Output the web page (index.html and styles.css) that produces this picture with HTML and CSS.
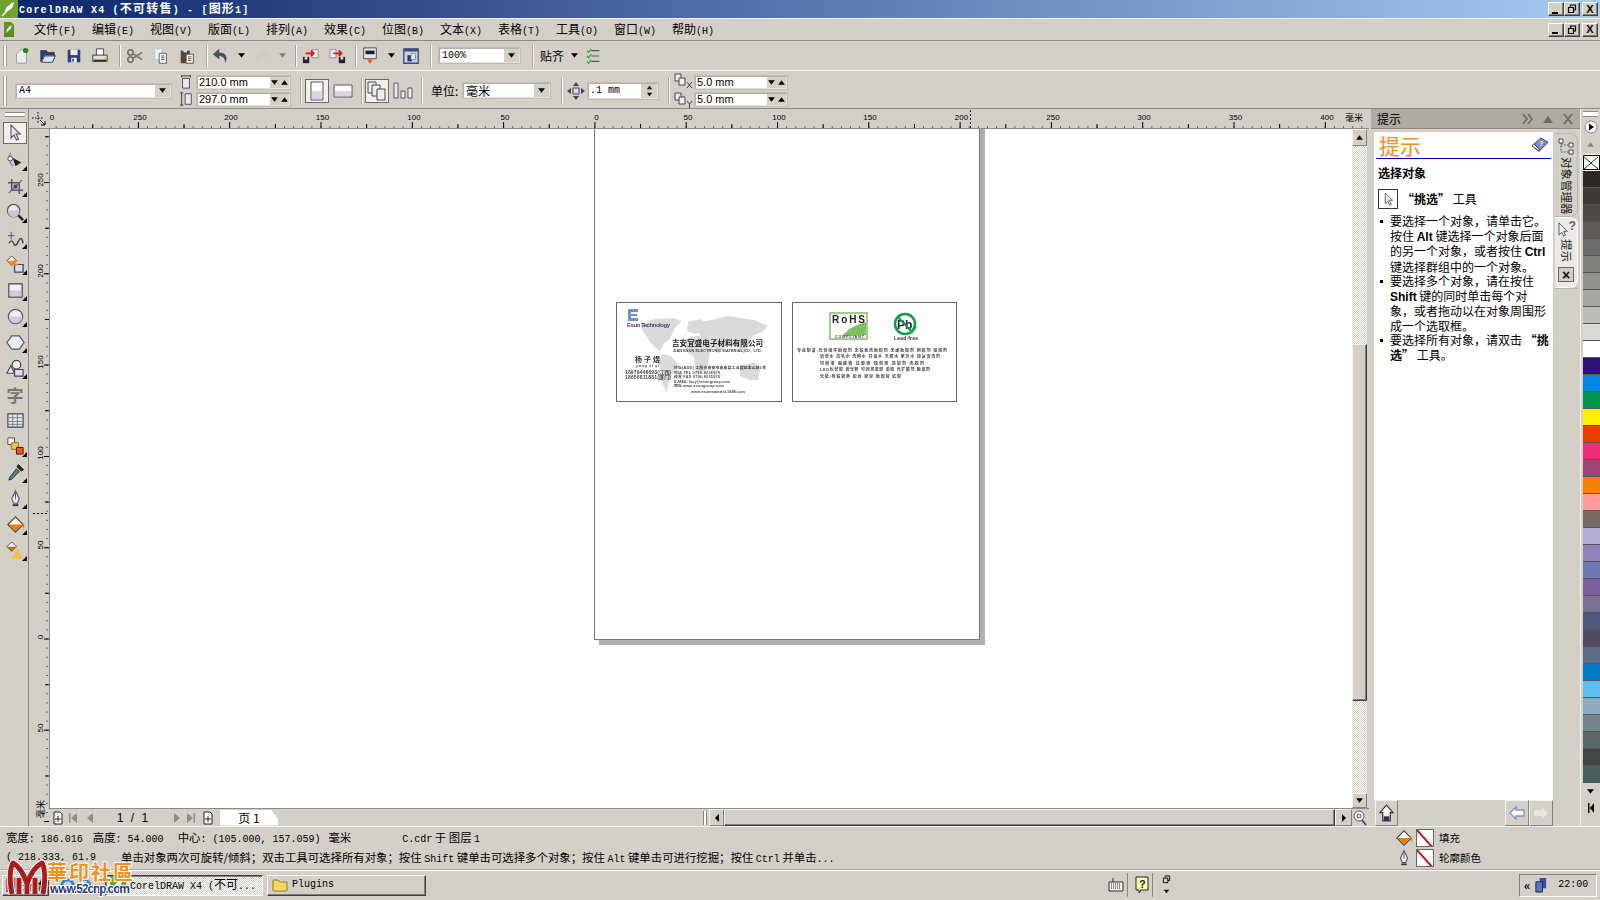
FILE: index.html
```html
<!DOCTYPE html>
<html lang="zh-CN">
<head>
<meta charset="utf-8">
<title>CorelDRAW X4</title>
<link rel="stylesheet" href="styles.css">
</head>
<body>
<svg class="defs" width="0" height="0">
  <symbol id="down" viewBox="0 0 8 8"><path d="M1 2h6L4 6z" fill="#000"/></symbol>
  <symbol id="up" viewBox="0 0 8 8"><path d="M1 6h6L4 2z" fill="#000"/></symbol>
  <symbol id="pen" viewBox="0 0 20 20"><path d="M10 2l4 8-2 5H8l-2-5z" fill="#eef" stroke="#556" stroke-width="1.2"/><path d="M10 4v7" stroke="#556"/><path d="M7 16h6v2H7z" fill="#333"/></symbol>
  <symbol id="bucket" viewBox="0 0 20 20"><path d="M10 2l8 8-8 8-8-8z" fill="#fff" stroke="#444" stroke-width="1.2"/><path d="M3 10h14l-7 7z" fill="#f07c00"/><path d="M17 9q2 1 1.500 5" fill="none" stroke="#f07c00" stroke-width="1.300"/></symbol>
  <symbol id="cursor" viewBox="0 0 16 18"><path d="M4 1v13l3-3 2.500 5 2-1-2.500-5H13z" fill="#e8eaf2" stroke="#556" stroke-width="1.100"/></symbol>
</svg>
<div class="app">

  <header class="titlebar">
    <svg class="appicon" viewBox="0 0 18 18"><rect width="18" height="18" fill="#6da52c"/><path d="M4 14Q5 6 14 2q-1 8-7 9z" fill="#fff"/><path d="M2 16l6-6" stroke="#dfe" stroke-width="1.500"/></svg>
    <span class="title-text"><span class="m">CorelDRAW X4 (</span>不可转售<span class="m">) - [</span>图形<span class="m">1]</span></span>
    <div class="winbtns">
      <span class="winbtn"><i class="min"></i></span>
      <span class="winbtn"><svg viewBox="0 0 10 10" width="10" height="10"><path d="M3.500 3V1h5v5H6.500M1.500 3.500h5v5h-5z" fill="none" stroke="#000" stroke-width="1.200"/></svg></span>
      <span class="winbtn gap2"><b>X</b></span>
    </div>
  </header>

  <nav class="menubar">
    <svg class="docicon" viewBox="0 0 10 15"><path d="M0 0h7l3 3v12H0z" fill="#5c8f2a"/><path d="M2 11Q3 5 8 3 7 8 4 9z" fill="#fff"/></svg>
    <span class="menu">文件<span class="m">(F)</span></span>
    <span class="menu">编辑<span class="m">(E)</span></span>
    <span class="menu">视图<span class="m">(V)</span></span>
    <span class="menu">版面<span class="m">(L)</span></span>
    <span class="menu">排列<span class="m">(A)</span></span>
    <span class="menu">效果<span class="m">(C)</span></span>
    <span class="menu">位图<span class="m">(B)</span></span>
    <span class="menu">文本<span class="m">(X)</span></span>
    <span class="menu">表格<span class="m">(T)</span></span>
    <span class="menu">工具<span class="m">(O)</span></span>
    <span class="menu">窗口<span class="m">(W)</span></span>
    <span class="menu">帮助<span class="m">(H)</span></span>
    <div class="winbtns">
      <span class="winbtn"><i class="min"></i></span>
      <span class="winbtn"><svg viewBox="0 0 10 10" width="10" height="10"><path d="M3.500 3V1h5v5H6.500M1.500 3.500h5v5h-5z" fill="none" stroke="#000" stroke-width="1.200"/></svg></span>
      <span class="winbtn gap2"><b>X</b></span>
    </div>
  </nav>

  <div class="toolbar">
    <i class="grip g3"></i>
    <span class="tb g2"><svg viewBox="0 0 20 20"><path d="M4 18V7l5-4h6v15z" fill="#eeeef0" stroke="#99a" /><circle cx="14" cy="4" r="3" fill="#1c8a16"/></svg></span>
    <span class="tb"><svg viewBox="0 0 20 20"><path d="M2 16V4h6l2 2h7v3H6l-4 7h13l3-7" fill="#2f3e68" stroke="#2f3e68"/><path d="M3 17l3-7h12l-3 7z" fill="#dfe3ee" stroke="#2f3e68"/></svg></span>
    <span class="tb"><svg viewBox="0 0 20 20"><path d="M3 3h14v14H3z" fill="#2f3e78"/><path d="M6 3h8v6H6z" fill="#e8eaf4"/><path d="M7 12h6v5H7z" fill="#fff"/><path d="M8 13h2v3H8z" fill="#2f3e78"/></svg></span>
    <span class="tb"><svg viewBox="0 0 20 20"><path d="M6 2h8v8H6z" fill="#fff" stroke="#444"/><path d="M2 9h16v7H2z" fill="#e4e0d0" stroke="#333"/><path d="M3 14h14v2H3z" fill="#333"/><path d="M15 11h2v1h-2z" fill="#dc0"/></svg></span>
    <i class="sep g6"></i>
    <span class="tb g1"><svg viewBox="0 0 20 20"><circle cx="5" cy="14" r="3" fill="none" stroke="#666" stroke-width="1.500"/><circle cx="5" cy="6" r="3" fill="none" stroke="#666" stroke-width="1.500"/><path d="M7 7l11 7M7 13l11-7" stroke="#777" stroke-width="1.800"/></svg></span>
    <span class="tb"><svg viewBox="0 0 20 20"><path d="M3 2h8v12H3z" fill="#eef8f8" stroke="#a8d0d0"/><path d="M8 7h8v11H8z" fill="#fff" stroke="#555"/><path d="M10 10h4M10 12h4M10 14h4" stroke="#555"/></svg></span>
    <span class="tb"><svg viewBox="0 0 20 20"><path d="M3 4h10v14H3z" fill="#5a4530"/><path d="M6 2h4v4H6z" fill="#cde"/><path d="M9 8h8v10H9z" fill="#fff" stroke="#444"/><path d="M11 11h4M11 13h4M11 15h4" stroke="#444"/></svg></span>
    <i class="sep g6"></i>
    <span class="tb"><svg viewBox="0 0 20 20"><path d="M8 2L1 8l7 6v-4q6 0 7 8 4-12-7-12z" fill="#4c5260"/></svg></span>
    <span class="tb-arrow"><svg viewBox="0 0 8 8"><use href="#down"/></svg></span>
    <span class="tb g1 faded"><svg viewBox="0 0 20 20"><path d="M12 2l7 6-7 6v-4q-6 0-7 8-4-12 7-12z" fill="#c4c4c2"/></svg></span>
    <span class="tb-arrow faded"><svg viewBox="0 0 8 8"><use href="#down"/></svg></span>
    <i class="sep g6"></i>
    <span class="tb g1"><svg viewBox="0 0 20 20"><path d="M11 3h7v9h-7z" fill="#eee" stroke="#889"/><path d="M1 11h7v7H1z" fill="#223" /><path d="M3 11h3v3H3z" fill="#ddd"/><path d="M4 7h9M10 4l3 3-3 3" fill="none" stroke="#d01818" stroke-width="2"/></svg></span>
    <span class="tb"><svg viewBox="0 0 20 20"><path d="M2 3h7v9H2z" fill="#eee" stroke="#889"/><path d="M12 11h7v7h-7z" fill="#223"/><path d="M14 11h3v3h-3z" fill="#ddd"/><path d="M6 7h9M12 4l3 3-3 3" fill="none" stroke="#d01818" stroke-width="2"/></svg></span>
    <i class="sep g5"></i>
    <span class="tb"><svg viewBox="0 0 20 20"><path d="M3 1h14v12H3z" fill="#e8e8ec" stroke="#445"/><path d="M5 4h10v4H5z" fill="#1a1a30"/><path d="M7 14l3 5 3-5z" fill="#f05a10"/></svg></span>
    <span class="tb-arrow g1"><svg viewBox="0 0 8 8"><use href="#down"/></svg></span>
    <span class="tb"><svg viewBox="0 0 20 20"><path d="M2 2h16v16H2z" fill="#cfd3e4" stroke="#3c4a7c" stroke-width="1.500"/><path d="M2 2h16v3H2z" fill="#3c4a7c"/><path d="M6 9h5v7H6z" fill="#2c3a6c"/><path d="M10 7h5v7h-5z" fill="#eee" stroke="#789"/></svg></span>
    <i class="sep g6"></i>
    <span class="field combo zoomfield g6"><span class="m">100%</span><span class="drop"><svg viewBox="0 0 8 8"><use href="#down"/></svg></span></span>
    <i class="sep g11"></i>
    <span class="label snap g6">贴齐</span>
    <span class="tb-arrow g3"><svg viewBox="0 0 8 8"><use href="#down"/></svg></span>
    <span class="tb"><svg viewBox="0 0 20 20"><path d="M7 4h9M7 10h9M7 16h9" stroke="#556" stroke-width="1.300"/><path d="M2 4l2 2 3-4M2 10l2 2 3-4M2 16l2 2 3-4" fill="none" stroke="#3c9a30" stroke-width="1.300"/></svg></span>
  </div>

  <div class="propbar">
    <i class="grip g3"></i>
    <span class="field combo a4 g8"><span class="m">A4</span><span class="drop"><svg viewBox="0 0 8 8"><use href="#down"/></svg></span></span>
    <div class="sizeicons g7">
      <svg viewBox="0 0 14 16"><path d="M3 4h8v11H3z" fill="#e8e8f0" stroke="#445"/><path d="M2 1h10M2 0v3M12 0v3" stroke="#333"/></svg>
      <svg viewBox="0 0 14 16"><path d="M6 2h7v12H6z" fill="#e8e8f0" stroke="#445"/><path d="M2 1v14M0 1h4M0 15h4" stroke="#333"/></svg>
    </div>
    <div class="stack g3">
      <span class="field spinfield"><span class="val">210.0 mm</span><span class="spin2"><svg viewBox="0 0 8 8"><use href="#down"/></svg><svg viewBox="0 0 8 8"><use href="#up"/></svg></span></span>
      <span class="field spinfield"><span class="val">297.0 mm</span><span class="spin2"><svg viewBox="0 0 8 8"><use href="#down"/></svg><svg viewBox="0 0 8 8"><use href="#up"/></svg></span></span>
    </div>
    <i class="sep g9"></i>
    <span class="pbtn on g3"><svg viewBox="0 0 14 20" width="14" height="20"><path d="M1 1h12v18H1z" fill="#fff" stroke="#556"/><path d="M2 10h10v8H2z" fill="#d8d8dc"/></svg></span>
    <span class="pbtn g2"><svg viewBox="0 0 20 14" width="20" height="14"><path d="M1 1h18v12H1z" fill="#fff" stroke="#556"/><path d="M2 7h16v5H2z" fill="#d8d8dc"/></svg></span>
    <i class="sep g6"></i>
    <span class="pbtn on g2"><svg viewBox="0 0 20 20" width="20" height="20"><path d="M1 1h8v11H1z" fill="#eee" stroke="#445"/><path d="M5 4h8v11H5z" fill="#eee" stroke="#445"/><path d="M10 8h8v11h-8z" fill="#eee" stroke="#445"/></svg></span>
    <span class="pbtn g2"><svg viewBox="0 0 20 20" width="20" height="20"><path d="M1 2h4v15H1zM8 10h4v7H8zM15 7h4v10h-4z" fill="#eee" stroke="#556"/></svg></span>
    <i class="sep g6"></i>
    <span class="label unit g8">单位:</span>
    <span class="field combo unitfield"><span>毫米</span><span class="drop"><svg viewBox="0 0 8 8"><use href="#down"/></svg></span></span>
    <i class="sep g10"></i>
    <span class="nudgeicon g4"><svg viewBox="0 0 18 18" width="18" height="18"><path d="M6 6h6v6H6z" fill="#dde" stroke="#445"/><path d="M9 0l3 4H6zM9 18l-3-4h6zM0 9l4-3v6zM18 9l-4 3V6z" fill="#445"/></svg></span>
    <span class="field nudge g2"><span class="m nudgeval">.1 mm</span><span class="spinv"><svg viewBox="0 0 8 8"><use href="#up"/></svg><svg viewBox="0 0 8 8"><use href="#down"/></svg></span></span>
    <i class="sep g9"></i>
    <div class="sizeicons dup g4">
      <svg viewBox="0 0 20 16"><path d="M1 1h6v7H1z" fill="#eee" stroke="#445"/><path d="M5 5h6v7H5z" fill="#eee" stroke="#445"/><path d="M13 9l5 6M18 9l-5 6" stroke="#445"/></svg>
      <svg viewBox="0 0 20 16"><path d="M1 1h6v7H1z" fill="#eee" stroke="#445"/><path d="M5 5h6v7H5z" fill="#eee" stroke="#445"/><path d="M13 9l2.500 3 2.500-3M15.500 12v4" fill="none" stroke="#445"/></svg>
    </div>
    <div class="stack">
      <span class="field spinfield dupfield"><span class="val">5.0 mm</span><span class="spin2"><svg viewBox="0 0 8 8"><use href="#down"/></svg><svg viewBox="0 0 8 8"><use href="#up"/></svg></span></span>
      <span class="field spinfield dupfield"><span class="val">5.0 mm</span><span class="spin2"><svg viewBox="0 0 8 8"><use href="#down"/></svg><svg viewBox="0 0 8 8"><use href="#up"/></svg></span></span>
    </div>
  </div>

  <div class="workspace">
    <aside class="toolbox">
      <i class="hgrip"></i>
      <span class="tool on"><svg viewBox="0 0 16 18"><use href="#cursor"/></svg></span>
      <span class="tool fly"><svg viewBox="0 0 20 20"><path d="M5 2q-4 7 2 14" fill="none" stroke="#889" stroke-width="1.500"/><circle cx="4.500" cy="8" r="2.500" fill="#fff" stroke="#445"/><path d="M7 7l9 5-6 4z" fill="#222"/></svg></span>
      <span class="tool fly"><svg viewBox="0 0 20 20"><path d="M6 2v12h12M2 6h12v12" fill="none" stroke="#556" stroke-width="1.600"/><path d="M3 17L17 3" stroke="#667" stroke-width="1.300"/><path d="M8 8h4v4H8z" fill="#445"/></svg></span>
      <span class="tool fly"><svg viewBox="0 0 20 20"><circle cx="8" cy="8" r="6.500" fill="#e6e8f2" stroke="#556" stroke-width="1.400"/><path d="M2 8h12v1a6 6 0 0 1-12 0z" fill="#c8c8d0"/><path d="M13 13l5 5" stroke="#222" stroke-width="2.500"/></svg></span>
      <span class="tool fly"><svg viewBox="0 0 20 20"><path d="M2 7h7M5.500 3v8" stroke="#667" stroke-width="1.200"/><path d="M3 15q3-5 5 0t5-2 5 2" fill="none" stroke="#445" stroke-width="1.500"/></svg></span>
      <span class="tool fly"><svg viewBox="0 0 20 20"><path d="M6 1l5 5-5 5-5-5z" fill="#fff" stroke="#444"/><path d="M1 6h10L6 11z" fill="#f09020"/><path d="M9 10h9v8H9z" fill="#d8dcec" stroke="#445" stroke-width="1.300"/><path d="M9 5v5h4" fill="none" stroke="#f07c00" stroke-width="1.500"/></svg></span>
      <span class="tool fly"><svg viewBox="0 0 20 20"><path d="M3 3h14v14H3z" fill="#f4f4f8" stroke="#445" stroke-width="1.300"/><path d="M4 10h12v6H4z" fill="#ccced8"/></svg></span>
      <span class="tool fly"><svg viewBox="0 0 20 20"><circle cx="10" cy="10" r="7.500" fill="#f4f4f8" stroke="#556" stroke-width="1.300"/><path d="M3 10h14a7 7 0 0 1-14 0z" fill="#ccced8"/></svg></span>
      <span class="tool fly"><svg viewBox="0 0 20 20"><path d="M6 3h8l5 7-5 7H6l-5-7z" fill="#eceef4" stroke="#556" stroke-width="1.300"/></svg></span>
      <span class="tool fly"><svg viewBox="0 0 20 20"><circle cx="11" cy="6" r="4.500" fill="#eceef4" stroke="#445" stroke-width="1.200"/><path d="M5 7L1 15h8z" fill="#eceef4" stroke="#445" stroke-width="1.200"/><path d="M9 11h9v7H9z" fill="#dde" stroke="#445" stroke-width="1.200"/></svg></span>
      <span class="tool glyph">字</span>
      <span class="tool"><svg viewBox="0 0 20 20"><path d="M2 3h16v14H2z" fill="#e8eaf2" stroke="#445" stroke-width="1.200"/><path d="M2 7h16M2 11h16M2 14h16M7 3v14M12 3v14" stroke="#778"/></svg></span>
      <span class="tool fly"><svg viewBox="0 0 20 20"><path d="M2 1h7v7H2z" fill="#fff" stroke="#445"/><path d="M6 6h7v7H6z" fill="#fcc84a" stroke="#a60"/><path d="M11 11h7v7h-7z" fill="#ee5a10" stroke="#222"/></svg></span>
      <span class="tool fly"><svg viewBox="0 0 20 20"><path d="M13 1l6 6-3 2-5-5z" fill="#222"/><path d="M11 6l3 3-8 8-3 1 1-3z" fill="#4f8c6a" stroke="#334"/></svg></span>
      <span class="tool fly"><svg viewBox="0 0 20 20"><use href="#pen"/></svg></span>
      <span class="tool fly"><svg viewBox="0 0 20 20"><use href="#bucket"/></svg></span>
      <span class="tool fly"><svg viewBox="0 0 20 20"><path d="M6 1l5 5-5 5-5-5z" fill="#fff" stroke="#444"/><path d="M1 6h10L6 11z" fill="#d86010"/><path d="M12 8l6 11H6z" fill="#f4c050"/></svg></span>
    </aside>

    <div class="center">
      <div class="hruler-row">
        <span class="corner"><svg viewBox="0 0 14 14" width="14" height="14"><path d="M6 0v12M0 6h12" stroke="#000" stroke-dasharray="1.500 1.500"/><path d="M8 8l5 5M13 9v4H9" fill="none" stroke="#000"/></svg></span>
        <svg class="hruler" width="1320" height="20" viewBox="0 0 1320 20">
          <line class="tick" x1="-2.400" x2="1320" y1="16" y2="16" stroke-width="6" stroke-dasharray="1 90.300"/>
          <line class="tick" x1="43.250" x2="1320" y1="17" y2="17" stroke-width="4" stroke-dasharray="1 90.300"/>
          <line class="tick" x1="-2.400" x2="1320" y1="18" y2="18" stroke-width="1" stroke-dasharray="1 8.130"/>
          <line class="tick" x1="921.500" x2="921.500" y1="1" y2="20" stroke-width="1" stroke-dasharray="2 2"/>
          <g class="rlabel">
            <text x="3" y="11">0</text><text x="91" y="11">250</text><text x="182" y="11">200</text><text x="273.500" y="11">150</text><text x="365" y="11">100</text><text x="456" y="11">50</text><text x="547.500" y="11">0</text><text x="639" y="11">50</text><text x="730" y="11">100</text><text x="821" y="11">150</text><text x="912.500" y="11">200</text><text x="1004" y="11">250</text><text x="1095" y="11">300</text><text x="1186.500" y="11">350</text><text x="1278" y="11">400</text>
          </g>
          <text class="runit" x="1296" y="12">毫米</text>
        </svg>
      </div>
      <div class="center-body">
        <svg class="vruler" width="20" height="697" viewBox="0 0 20 697">
          <line class="tick" y1="-38.300" y2="697" x1="17.500" x2="17.500" stroke-width="5" stroke-dasharray="1 90.300"/>
          <line class="tick" y1="7.350" y2="697" x1="18" x2="18" stroke-width="4" stroke-dasharray="1 90.300"/>
          <line class="tick" y1="-38.300" y2="697" x1="18" x2="18" stroke-width="1" stroke-dasharray="1 8.130"/>
          <line class="tick" x1="4" x2="20" y1="384.500" y2="384.500" stroke-width="1" stroke-dasharray="2 2"/>
          <g class="rlabel">
            <text transform="translate(14 51) rotate(-90)">250</text>
            <text transform="translate(14 142) rotate(-90)">200</text>
            <text transform="translate(14 233) rotate(-90)">150</text>
            <text transform="translate(14 324) rotate(-90)">100</text>
            <text transform="translate(14 416) rotate(-90)">50</text>
            <text transform="translate(14 508) rotate(-90)">0</text>
            <text transform="translate(14 599) rotate(-90)">50</text>
          </g>
          <text class="runit" transform="translate(15 689) rotate(-90)">毫米</text>
        </svg>
        <div class="center-main">
          <div class="canvas-row">
            <div class="canvas">
              <div class="page"></div>
              <svg class="card card1" width="166" height="100" viewBox="0 0 166 100" preserveAspectRatio="none">
                <rect x="0.500" y="0.500" width="165" height="99" fill="#fff" stroke="#666"/>
                <g fill="#dadada">
                  <path d="M24 24l14-7 20-1 8 3-8 8-4 10-6 4-4 8-6-4-6-8-5-8z"/>
                  <path d="M46 52l9 2 7 8-5 10-4 6-2 12-4-6-1-14-4-10z"/>
                  <path d="M72 20l12-3 6 4-3 8-8 3-8-3z"/>
                  <path d="M72 36l14-3 8 6 6 2-6 10-2 12-6 8-6-2-2-14-8-6-2-8z"/>
                  <path d="M86 20l26-6 26 4 14 6-6 6-10 4-4 10-4 8-8-8-10 0-8 8-6-10-8-4-6-8z"/>
                  <path d="M124 64l14-4 6 8-2 10-8 0-10-4z"/>
                </g>
                <path d="M12 7h10v3h-7v2h6v2h-6v2h7v3H12z" fill="#6b93c9"/>
                <text class="c-en" x="11" y="25" textLength="43">Esun Technology</text>
                <text class="c-t" x="56" y="44" textLength="91">吉安宜盛电子材料有限公司</text>
                <text class="c-s" x="57" y="50" textLength="89">JIAN ESUN ELECTRONIC MATERIAL CO., LTD.</text>
                <text class="c-n" x="19" y="60" textLength="25">杨子煜</text>
                <text class="c-s" x="20" y="65" textLength="23">yang zi yi</text>
                <text class="c-d" x="9" y="72" textLength="46">18979448693(江西)</text>
                <text class="c-d" x="9" y="77" textLength="46">18650811881(厦门)</text>
                <text class="c-s" x="58" y="67" textLength="92">地址(ADD) 江西省吉安市吉安县工业园区金山路1号</text>
                <text class="c-s" x="58" y="72" textLength="46">电话 TEL 0796-8235979</text>
                <text class="c-s" x="58" y="76" textLength="46">传真 FAX 0796-8235975</text>
                <text class="c-s" x="58" y="81" textLength="56">E-MAIL lucy@esungroup.com</text>
                <text class="c-s" x="58" y="85" textLength="50">网址 www.esungroup.com</text>
                <text class="c-s" x="75" y="91" textLength="54">www.esunmaterial.1688.com</text>
              </svg>
              <svg class="card card2" width="165" height="100" viewBox="0 0 165 100" preserveAspectRatio="none">
                <rect x="0.500" y="0.500" width="164" height="99" fill="#fff" stroke="#666"/>
                <rect x="38" y="11" width="37" height="26" fill="#fff" stroke="#5cb040" stroke-width="1.200"/>
                <path d="M50 34q8-10 24-14v13q-12 1-24 1z" fill="#7cc060"/>
                <text class="c-rohs" x="40" y="21" textLength="33">RoHS</text>
                <text class="c-s" x="43" y="36" textLength="29">COMPLIANT</text>
                <circle cx="113" cy="22" r="10" fill="#fff" stroke="#0a9a50" stroke-width="2.500"/>
                <text class="c-pb" x="105" y="27">Pb</text>
                <path d="M106 15l13 14" stroke="#0a9a50" stroke-width="2"/>
                <path d="M116 27l4 5 6-8-5 3-1 2z" fill="#2faa40"/>
                <text class="c-lf" x="102" y="38" textLength="24">Lead-free</text>
                <text class="c-s2" x="5" y="50" textLength="150">专业制造:光伏组件助焊剂 无铅免洗助焊剂 无卤助焊剂 铜焊剂 铝焊剂</text>
                <text class="c-s2" x="28" y="56" textLength="120">清洗水 抗氧水 洗网水 开油水 天那水 紫外水 碳氟清洗剂</text>
                <text class="c-s2" x="28" y="63" textLength="104">切削液 脱膜液 显影液 蚀刻液 退锡剂 肉胶剂</text>
                <text class="c-s2" x="28" y="69" textLength="110">LED封装胶 荧光粉 可剥离蓝胶 黄胶 光扩散剂 脱模剂</text>
                <text class="c-s2" x="28" y="76" textLength="81">光纸/有铅锡条 锡丝 锡膏 助焊膏 红胶</text>
              </svg>
            </div>
            <div class="vscroll">
              <span class="sbtn sbtn-up"><svg viewBox="0 0 8 8" width="9" height="9"><use href="#up"/></svg></span>
              <span class="track t1"></span>
              <span class="thumb"></span>
              <span class="track t2"></span>
              <span class="sbtn sbtn-down"><svg viewBox="0 0 8 8" width="9" height="9"><use href="#down"/></svg></span>
            </div>
            <span class="vgap"></span>
          </div>
          <div class="navbar">
            <span class="nav-ic addp"><svg viewBox="0 0 10 14" width="10" height="14"><path d="M1 1h6l2 2v10H1z" fill="#fff" stroke="#222"/><path d="M5 5v6M2 8h6" stroke="#222"/></svg></span>
            <span class="nav-ic first"><svg viewBox="0 0 10 12" width="10" height="12"><path d="M1 1h1.500v10H1zM9 1v10L3 6z" fill="#8c8c88"/></svg></span>
            <span class="nav-ic prev"><svg viewBox="0 0 8 12" width="8" height="12"><path d="M7 1v10L1 6z" fill="#8c8c88"/></svg></span>
            <span class="pagecount">1 / 1</span>
            <span class="nav-ic"><svg viewBox="0 0 8 12" width="8" height="12"><path d="M1 1v10l6-5z" fill="#8c8c88"/></svg></span>
            <span class="nav-ic last"><svg viewBox="0 0 10 12" width="10" height="12"><path d="M1 1v10l6-5zM7.500 1H9v10H7.500z" fill="#8c8c88"/></svg></span>
            <span class="nav-ic addp2"><svg viewBox="0 0 10 14" width="10" height="14"><path d="M1 1h6l2 2v10H1z" fill="#fff" stroke="#222"/><path d="M5 5v6M2 8h6" stroke="#222"/></svg></span>
            <span class="pagetab">页 1</span>
            <i class="navgrip"></i>
            <span class="sbtn hbtn"><svg viewBox="0 0 8 8" width="8" height="8"><path d="M6 0v8L2 4z" fill="#000"/></svg></span>
            <span class="thumb hthumb"></span>
            <span class="sbtn hbtn"><svg viewBox="0 0 8 8" width="8" height="8"><path d="M2 0v8l4-4z" fill="#000"/></svg></span>
            <span class="navzoom"><svg viewBox="0 0 14 16" width="14" height="16"><circle cx="6" cy="6" r="5" fill="#fff" stroke="#556"/><circle cx="6" cy="6" r="2" fill="none" stroke="#556"/><path d="M9 10l4 5" stroke="#334" stroke-width="1.500"/></svg></span>
          </div>
        </div>
      </div>
    </div>

    <section class="docker">
      <div class="docker-title"><span class="dt-text">提示</span>
        <span class="dt-icons">
          <svg viewBox="0 0 12 10" width="12" height="10"><path d="M1 0l4 5-4 5M6 0l4 5-4 5" fill="none" stroke="#6f6c66" stroke-width="1.600"/></svg>
          <svg viewBox="0 0 12 10" width="12" height="10"><path d="M1 9h10L6 2z" fill="#6f6c66"/></svg>
          <svg viewBox="0 0 12 10" width="12" height="10"><path d="M2 0l8 10M10 0L2 10" stroke="#6f6c66" stroke-width="1.800"/></svg>
        </span>
      </div>
      <div class="docker-main">
        <div class="tip-col">
          <div class="tip-body">
            <div class="tip-head">
              <h1>提示</h1>
              <svg viewBox="0 0 20 18" width="18" height="16"><path d="M1 10L11 1l8 5-10 10z" fill="#7c88c8" stroke="#334"/><path d="M1 10l8 6v-3L3 8z" fill="#fff" stroke="#334"/><text x="9" y="10" class="bookq">?</text></svg>
            </div>
            <h2>选择对象</h2>
            <div class="tip-tool">
              <span class="tip-icon"><svg viewBox="0 0 16 18" width="13" height="15"><use href="#cursor"/></svg></span>
              <span><b>“挑选”</b> 工具</span>
            </div>
            <ul>
              <li>要选择一个对象，请单击它。<br>按住 <b class="k">Alt</b> 键选择一个对象后面<br>的另一个对象，或者按住 <b class="k">Ctrl</b><br>键选择群组中的一个对象。</li>
              <li>要选择多个对象，请在按住<br><b class="k">Shift</b> 键的同时单击每个对<br>象，或者拖动以在对象周围形<br>成一个选取框。</li>
              <li>要选择所有对象，请双击 <b>“挑<br>选”</b> 工具。</li>
            </ul>
          </div>
          <div class="tip-foot">
            <span class="home"><svg viewBox="0 0 16 20" width="15" height="19"><path d="M8 1l7 8h-3v9H4V9H1z" fill="#fff" stroke="#334" stroke-width="1.300"/><path d="M5 13h6v5H5z" fill="#334"/></svg></span>
            <span class="navb nb1"><svg viewBox="0 0 16 14" width="16" height="14"><path d="M7 1L1 7l6 6V10h8V4H7z" fill="#fff" stroke="#7a94c8" stroke-width="1.300"/></svg></span>
            <span class="navb"><svg viewBox="0 0 16 14" width="16" height="14"><path d="M9 1l6 6-6 6V10H1V4h8z" fill="#e8e6e0"/></svg></span>
          </div>
        </div>
        <div class="tabs">
          <div class="tab tab1">
            <svg viewBox="0 0 18 18" width="18" height="18"><path d="M2 2h4v4H2zM12 6h4v4h-4zM12 13h4v4h-4z" fill="#fff" stroke="#445"/><path d="M4 6v9h8M4 8h8" fill="none" stroke="#445" stroke-dasharray="1.500 1.500"/></svg>
            <span class="vtext">对象管理器</span>
          </div>
          <div class="tab tab2">
            <svg viewBox="0 0 20 18" width="19" height="17"><path d="M2 3v13l3-3 2 4 2-1-2-4h4z" fill="#e8eaf2" stroke="#556"/><text x="12" y="11" class="tabq">?</text></svg>
            <span class="vtext">提示</span>
            <span class="tabx"><b>×</b></span>
          </div>
          <div class="tab-rest"></div>
        </div>
      </div>
    </section>

    <aside class="palette">
      <i class="hgrip short"></i>
      <span class="pal-play"><svg viewBox="0 0 14 14" width="14" height="14"><circle cx="7" cy="7" r="6" fill="#fff" stroke="#888"/><path d="M5 3.500v7l5-3.500z" fill="#000"/></svg></span>
      <span class="pal-arrow up"><svg viewBox="0 0 8 8" width="9" height="9"><path d="M1 6h6L4 2z" fill="#8a8882"/></svg></span>
      <span class="swatch none"><svg viewBox="0 0 16 14" width="14" height="12" preserveAspectRatio="none"><path d="M0 0l16 14M16 0L0 14" stroke="#000"/></svg></span>
      <span class="swatch s01"></span><span class="swatch s02"></span><span class="swatch s03"></span><span class="swatch s04"></span>
      <span class="swatch s05"></span><span class="swatch s06"></span><span class="swatch s07"></span><span class="swatch s08"></span>
      <span class="swatch s09"></span><span class="swatch s10"></span><span class="swatch s11"></span><span class="swatch s12"></span>
      <span class="swatch s13"></span><span class="swatch s14"></span><span class="swatch s15"></span><span class="swatch s16"></span>
      <span class="swatch s17"></span><span class="swatch s18"></span><span class="swatch s19"></span><span class="swatch s20"></span>
      <span class="swatch s21"></span><span class="swatch s22"></span><span class="swatch s23"></span><span class="swatch s24"></span>
      <span class="swatch s25"></span><span class="swatch s26"></span><span class="swatch s27"></span><span class="swatch s28"></span>
      <span class="swatch s29"></span><span class="swatch s30"></span><span class="swatch s31"></span><span class="swatch s32"></span>
      <span class="swatch s33"></span><span class="swatch s34"></span><span class="swatch s35"></span><span class="swatch s36"></span>
      <span class="pal-arrow"><svg viewBox="0 0 8 8" width="9" height="9"><path d="M1 2h6L4 6z" fill="#000"/></svg></span>
      <span class="pal-arrow end"><svg viewBox="0 0 8 10" width="8" height="10"><path d="M1 0h1.500v10H1zM7 0v10L3 5z" fill="#000"/></svg></span>
    </aside>
  </div>

  <footer class="status">
    <div class="status-text">
      <div class="sline"><span>宽度<span class="m">: 186.016</span></span><span class="sg1">高度<span class="m">: 54.000</span></span><span class="sg2">中心<span class="m">: (105.000, 157.059)</span></span><span class="sg3">毫米</span><span class="sg4"><span class="m">C.cdr</span> 于 图层 <span class="m">1</span></span></div>
      <div class="sline"><span class="coord m">( 218.333, 61.9</span><span>单击对象两次可旋转/倾斜；双击工具可选择所有对象；按住 <span class="m">Shift</span> 键单击可选择多个对象；按住 <span class="m">Alt</span> 键单击可进行挖掘；按住 <span class="m">Ctrl</span> 并单击<span class="m">...</span></span></div>
    </div>
    <div class="status-fill">
      <div class="fillrow"><svg viewBox="0 0 20 20" width="18" height="18"><use href="#bucket"/></svg><span class="nocolor"></span><span>填充</span></div>
      <div class="fillrow"><svg viewBox="0 0 20 20" width="18" height="18"><use href="#pen"/></svg><span class="nocolor"></span><span>轮廓颜色</span></div>
    </div>
  </footer>

  <div class="taskbar">
    <span class="start raised-b"><span class="startlogo"></span><b>开始</b></span>
    <span class="ql"><svg viewBox="0 0 16 16" width="15" height="15"><circle cx="8" cy="8" r="6" fill="none" stroke="#2a80d8" stroke-width="3"/></svg><svg viewBox="0 0 16 16" width="15" height="15"><circle cx="8" cy="8" r="6" fill="#bde" stroke="#2a80d8" stroke-width="2"/><path d="M4 12L12 4" stroke="#38a" stroke-width="1.500"/></svg></span>
    <span class="task active"><svg viewBox="0 0 16 16" width="16" height="16"><rect width="16" height="16" fill="#6da52c"/><path d="M3 12Q5 5 13 2 12 9 6 10z" fill="#fff"/></svg><span><span class="m">CorelDRAW X4 (</span>不可<span class="m">...</span></span></span>
    <span class="task"><svg viewBox="0 0 16 14" width="16" height="14"><path d="M1 2h5l2 2h7v9H1z" fill="#f6d860" stroke="#997a20"/></svg><span class="m">Plugins</span></span>
    <span class="tray-ic kb"><svg viewBox="0 0 16 14" width="16" height="14"><path d="M5 4V0M1 4h14v9H1z" fill="#eee" stroke="#333"/><path d="M3 6h10M3 8h10M3 10h10" stroke="#333" stroke-dasharray="1 1"/></svg></span>
    <i class="tsep"></i>
    <span class="tray-ic help"><svg viewBox="0 0 14 18" width="14" height="18"><path d="M1 1h12v13H6l-2 3v-3H1z" fill="#ffffa8" stroke="#222"/><text x="4" y="12" class="helpq">?</text></svg></span>
    <i class="tsep"></i>
    <span class="tray-ic rest"><svg viewBox="0 0 10 10" width="9" height="9"><path d="M3.500 3V1h5v5H6.500M1.500 3.500h5v5h-5z" fill="none" stroke="#000"/></svg><svg viewBox="0 0 8 8" width="7" height="7"><use href="#down"/></svg></span>
    <span class="tray"><b>«</b><svg viewBox="0 0 16 18" width="15" height="17"><path d="M6 1h7v11H6z" fill="#3850a8"/><path d="M2 5h7v11H2z" fill="#5c74c8" stroke="#223"/></svg><span class="m clock">22:00</span></span>
  </div>

  <svg class="watermark" width="140" height="50" viewBox="0 0 140 50">
    <path class="wm-halo" d="M12 44Q8 22 13 13 22 18 27 34 32 18 42 13 47 22 43 44M27 34V44M19 44V28M35 44V28"/>
    <path class="wm-m" d="M12 44Q8 22 13 13 22 18 27 34 32 18 42 13 47 22 43 44M27 34V44M19 44V28M35 44V28"/>
    <text class="wm-cn" x="47" y="30" textLength="86">華印社區</text>
    <text class="wm-en" x="50" y="43" textLength="80">www.52cnp.com</text>
  </svg>
</div>
</body>
</html>
```

FILE: styles.css
```css
* { box-sizing: border-box; }
html, body { margin: 0; padding: 0; }
body {
  width: 1600px; height: 900px; overflow: hidden;
  font: 12px/1 "Noto Sans CJK SC", "Liberation Sans", sans-serif;
  color: #000; background: #d4d0c8;
}
.defs { position: absolute; }
i { display: block; font-style: normal; }
.m { font-family: "Liberation Mono", "Noto Sans CJK SC", monospace; font-size: 10px; }

.app { position: relative; width: 1600px; height: 900px; display: flex; flex-direction: column; overflow: hidden; }

.g1 { margin-left: 1px; } .g2 { margin-left: 2px; } .g3 { margin-left: 3px; } .g4 { margin-left: 4px; }
.g5 { margin-left: 5px; } .g6 { margin-left: 6px; } .g7 { margin-left: 7px; } .g8 { margin-left: 8px; }
.g9 { margin-left: 9px; } .g10 { margin-left: 10px; } .g11 { margin-left: 11px; }

/* title + menu */
.titlebar {
  height: 18px; flex: none; display: flex; align-items: center;
  background: linear-gradient(90deg, #0a246a 0%, #a6caf0 100%);
  color: #fff; font-weight: bold;
}
.appicon { width: 18px; height: 18px; flex: none; }
.title-text { margin-left: 1px; white-space: pre; letter-spacing: 1.200px; }
.winbtns { margin-left: auto; display: flex; margin-right: 2px; }
.winbtn {
  width: 16px; height: 14px; background: #d4d0c8; color: #000; font-size: 11px;
  border: 1px solid; border-color: #fff #404040 #404040 #fff;
  box-shadow: inset -1px -1px #808080;
  display: flex; align-items: center; justify-content: center;
  font-family: "Liberation Sans", sans-serif; letter-spacing: 0;
}
.winbtn.gap2 { margin-left: 2px; }
.min { width: 6px; height: 2px; background: #000; margin-top: 7px; margin-right: 2px; }

.menubar {
  height: 23px; flex: none; display: flex; align-items: center;
  border-top: 1px solid #f4f2ec; border-bottom: 1px solid #8c8a84;
}
.docicon { width: 10px; height: 15px; margin: 0 20px 0 4px; flex: none; }
.menu { width: 58px; flex: none; }

/* toolbars */
.toolbar {
  height: 30px; flex: none; display: flex; align-items: center;
  border-bottom: 1px solid #f4f2ec;
}
.propbar {
  height: 38px; flex: none; display: flex; align-items: center; padding-top: 2px;
  border-bottom: 1px solid #8c8a84;
}
.grip { width: 4px; height: 21px; border-left: 1px solid #9c9a94; border-right: 1px solid #9c9a94; background: #fff; flex: none; }
.propbar .grip { height: 30px; }
.tb { width: 26px; height: 22px; flex: none; display: flex; align-items: center; justify-content: center; }
.tb svg { width: 18px; height: 18px; }
.tb-arrow { width: 14px; flex: none; display: flex; justify-content: center; }
.tb-arrow svg { width: 9px; height: 9px; }
.faded { opacity: .4; }
.sep { width: 2px; height: 22px; border-left: 1px solid #a8a69f; border-right: 1px solid #fff; flex: none; }
.propbar .sep { height: 26px; }
.field {
  background: #fff; flex: none; display: flex; align-items: center;
  border: 2px solid; border-color: #b4b1a9 #e4e2dc #e4e2dc #b4b1a9;
  outline: 1px solid #c0bdb5; outline-offset: -1px;
  height: 15px;
}
.combo { height: 16px; padding-left: 2px; }
.drop { margin-left: auto; width: 15px; height: 100%; background: #d4d0c8; display: flex; align-items: center; justify-content: center; }
.drop svg { width: 9px; height: 9px; }
.zoomfield { width: 83px; height: 17px; }
.a4 { width: 157px; }
.unitfield { width: 89px; height: 17px; }
.label { flex: none; }
.snap { width: 24px; }
.unit { width: 31px; }
.sizeicons { width: 14px; flex: none; display: flex; flex-direction: column; gap: 3px; }
.sizeicons svg { width: 14px; height: 14px; }
.sizeicons.dup { width: 20px; }
.sizeicons.dup svg { width: 20px; height: 16px; }
.stack { display: flex; flex-direction: column; gap: 2px; flex: none; }
.spinfield { width: 95px; height: 15px; }
.dupfield { width: 94px; }
.val { font: 11px "Liberation Sans", sans-serif; padding-left: 1px; }
.spin2 { margin-left: auto; width: 19px; height: 100%; display: flex; align-items: center; background: #d4d0c8; gap: 1px; }
.spin2 svg { width: 9px; height: 9px; }
.pbtn { width: 24px; height: 24px; flex: none; display: flex; align-items: center; justify-content: center; }
.pbtn.on { background: #f2f0e9; border: 1px solid #6e6c66; }
.nudgeicon { width: 18px; height: 18px; flex: none; }
.nudge { width: 72px; height: 18px; }
.nudgeval { padding-left: 1px; }
.spinv { margin-left: auto; width: 16px; height: 100%; display: flex; flex-direction: column; align-items: center; justify-content: center; background: #d4d0c8; }
.spinv svg { width: 9px; height: 7px; }

/* workspace */
.workspace { height: 717px; flex: none; display: flex; }
.toolbox { width: 29px; flex: none; padding-left: 2px; border-right: 1px solid #8c8a84; display: flex; flex-direction: column; align-items: center; }
.hgrip { width: 20px; height: 5px; margin: 3px 0 5px; border-top: 1px solid #8c8a84; border-bottom: 1px solid #8c8a84; background: #fff; flex: none; }
.tool { position: relative; width: 24px; height: 26px; flex: none; display: flex; align-items: center; justify-content: center; }
.tool svg { width: 19px; height: 19px; }
.tool.on { height: 22px; margin-bottom: 3px; background: #f2f0e9; border: 1px solid #6e6c66; }
.tool.on svg { width: 16px; height: 18px; }
.tool.fly::after {
  content: ""; position: absolute; right: 0; bottom: 2px;
  border-style: solid; border-width: 0 0 5px 5px;
  border-color: transparent transparent #000 transparent;
}
.glyph { font-size: 17px; font-weight: bold; color: #777; }

.center { width: 1340px; flex: none; display: flex; flex-direction: column; }
.hruler-row { height: 20px; flex: none; display: flex; border-bottom: 1px solid #8c8a84; }
.corner { width: 20px; flex: none; display: flex; align-items: center; justify-content: center; }
.hruler, .vruler { display: block; flex: none; overflow: hidden; }
.tick { stroke: #000; }
.rlabel text { font: 8px "Liberation Sans", sans-serif; text-anchor: middle; fill: #000; }
.runit { font: 9px "Noto Sans CJK SC", sans-serif; fill: #000; }
.center-body { flex: 1; display: flex; min-height: 0; }
.center-main { flex: 1; display: flex; flex-direction: column; min-width: 0; }
.canvas-row { height: 679px; flex: none; display: flex; }
.canvas { position: relative; width: 1303px; background: #fff; overflow: hidden; border-left: 1px solid #8c8a84; flex: none; }
.page {
  position: absolute; left: 544px; top: -32px; width: 386px; height: 543px;
  background: #fff; border: 1px solid #777; box-shadow: 5px 5px 0 #b0b0b0;
}
.card { position: absolute; top: 173px; filter: blur(.45px); }
.card1 { left: 566px; }
.card2 { left: 742px; }
.card text { font-family: "Liberation Sans", "Noto Sans CJK SC", sans-serif; }
.c-en { font-size: 6px; font-weight: bold; fill: #445; }
.c-t { font-size: 7.500px; font-weight: bold; fill: #222; }
.c-s { font-size: 3.800px; fill: #444; font-weight: bold; }
.c-s2 { font-size: 4px; fill: #444; font-weight: bold; }
.c-n { font-size: 7px; fill: #333; font-weight: bold; }
.c-d { font-size: 5px; fill: #444; font-weight: bold; }
.c-rohs { font-size: 10px; font-weight: bold; fill: #222; }
.c-pb { font-size: 12px; font-weight: bold; fill: #222; }
.c-lf { font-size: 5px; font-weight: bold; fill: #333; }

.vscroll { width: 15px; flex: none; display: flex; flex-direction: column; }
.vgap { width: 2px; flex: none; }
.sbtn {
  background: #d4d0c8; border: 1px solid; border-color: #f4f2ec #808080 #808080 #f4f2ec;
  display: flex; align-items: center; justify-content: center; flex: none;
}
.sbtn-up { height: 17px; }
.sbtn-down { height: 15px; }
.track { background: repeating-conic-gradient(#d4d0c8 0 25%, #fff 0 50%) 0 0 / 2px 2px; flex: none; }
.t1 { height: 198px; }
.t2 { flex: 1; }
.thumb { background: #d4d0c8; border: 1px solid; border-color: #f4f2ec #404040 #404040 #f4f2ec; box-shadow: inset -1px -1px #808080; flex: none; }
.vscroll .thumb { height: 357px; }

.navbar { height: 18px; flex: none; display: flex; align-items: center; border-top: 1px solid #8c8a84; }
.nav-ic { width: 14px; display: flex; justify-content: center; flex: none; }
.addp { margin-left: 2px; }
.first { margin-left: 1px; }
.prev { margin-left: 3px; }
.pagecount { width: 73px; text-align: center; font: 12px "Liberation Sans", sans-serif; letter-spacing: 2px; flex: none; }
.addp2 { margin-left: 3px; }
.pagetab {
  width: 58px; height: 16px; margin-left: 5px; background: #fff; flex: none; text-align: center;
  line-height: 15px; clip-path: polygon(0 0, 88% 0, 100% 60%, 100% 100%, 0 100%);
}
.navgrip { width: 4px; height: 14px; margin-left: 425px; border-left: 1px solid #8c8a84; border-right: 1px solid #8c8a84; background: #fff; flex: none; }
.hbtn { width: 15px; height: 17px; margin-left: 2px; }
.hthumb { width: 611px; height: 17px; }
.hthumb + .hbtn { margin-left: 0; width: 17px; }
.navzoom { width: 16px; flex: none; display: flex; justify-content: center; }

/* docker */
.docker { width: 211px; flex: none; padding-left: 2px; display: flex; flex-direction: column; }
.docker-title { height: 20px; flex: none; background: #aeaba3; display: flex; align-items: center; padding: 0 6px; border-bottom: 1px solid #8c8a84; }
.dt-text { font-size: 12px; }
.dt-icons { margin-left: auto; display: flex; gap: 8px; align-items: center; }
.docker-main { flex: 1; display: flex; min-height: 0; }
.tip-col { width: 179px; margin: 3px 0 0 3px; flex: none; display: flex; flex-direction: column; }
.tip-body { flex: 1; background: #fff; padding: 0 2px; min-height: 0; }
.tip-head { display: flex; align-items: center; justify-content: space-between; height: 27px; border-bottom: 1px solid #0000c0; padding: 0 2px 0 3px; margin-bottom: 7px; }
h1 { margin: 0; font-size: 21px; font-weight: normal; color: #f09018; line-height: 26px; align-self: flex-start; }
.bookq { font: bold 8px "Liberation Sans", sans-serif; fill: #fff; }
h2 { margin: 0 0 0 2px; font-size: 12px; font-weight: bold; line-height: 14px; }
.tip-tool { display: flex; align-items: center; gap: 4px; margin: 9px 0 5px 2px; font-size: 12px; }
.tip-icon { width: 20px; height: 20px; border: 1px solid #333; display: flex; align-items: center; justify-content: center; }
ul { margin: 0; padding: 0; list-style: none; }
li { position: relative; padding-left: 14px; font-size: 12px; line-height: 14.500px; white-space: nowrap; }
li::before { content: ""; position: absolute; left: 4px; top: 6px; width: 3px; height: 3px; background: #000; }
.k { font-family: "Liberation Sans", sans-serif; }
.tip-foot { height: 26px; flex: none; display: flex; align-items: stretch; }
.home { width: 23px; margin-left: 1px; border: 1px solid; border-color: #f4f2ec #808080 #808080 #f4f2ec; display: flex; align-items: center; justify-content: center; }
.navb { width: 24px; border: 1px solid; border-color: #f4f2ec #808080 #808080 #f4f2ec; display: flex; align-items: center; justify-content: center; }
.nb1 { margin-left: auto; }
.tabs { width: 25px; flex: none; margin-top: 4px; display: flex; flex-direction: column; padding-left: 2px; }
.tab { width: 23px; display: flex; flex-direction: column; align-items: center; border: 1px solid #b8b5ad; border-left: 0; border-radius: 0 8px 8px 0; }
.tab1 { height: 84px; padding-top: 3px; }
.tab2 { height: 71px; background: #eceae4; padding-top: 2px; border-color: #fff; }
.tab-rest { height: 0; border-top: 1px solid #b8b5ad; }
.vtext { writing-mode: vertical-rl; text-orientation: sideways; font-size: 11.500px; margin-top: 2px; color: #222; }
.tabq { font: bold 13px "Liberation Sans", sans-serif; fill: #667; }
.tabx { width: 16px; height: 15px; margin-top: 5px; border: 1px solid #666; background: #d4d0c8; display: flex; align-items: center; justify-content: center; font: bold 14px "Liberation Sans", sans-serif; }

/* palette */
.palette { width: 20px; flex: none; border-left: 1px solid #f4f2ec; display: flex; flex-direction: column; align-items: center; }
.hgrip.short { width: 15px; margin: 2px 0 3px; height: 6px; }
.pal-play { height: 16px; flex: none; }
.pal-arrow { height: 16px; flex: none; display: flex; align-items: center; justify-content: center; }
.pal-arrow.up { height: 17px; margin-bottom: 2px; }
.swatch { width: 17px; height: 17px; flex: none; border-bottom: 1px solid #555; margin-left: 1px; }
.swatch.none { height: 15px; background: #fff; border: 1px solid #000; outline: 1px solid #fff; margin-bottom: 1px; display: flex; align-items: center; justify-content: center; }
.pal-arrow.end { margin-top: 1px; }
.s01 { background: #2b2824; } .s02 { background: #3b3a37; } .s03 { background: #4b4845; } .s04 { background: #5d5a58; }
.s05 { background: #6e6c6a; } .s06 { background: #807f7d; } .s07 { background: #929190; } .s08 { background: #a6a6a4; }
.s09 { background: #bcbcba; } .s10 { background: #d9d9d8; } .s11 { background: #ffffff; } .s12 { background: #2e0f78; }
.s13 { background: #0088e0; } .s14 { background: #00964e; } .s15 { background: #fff200; } .s16 { background: #e83d00; }
.s17 { background: #ee2d7a; } .s18 { background: #a04577; } .s19 { background: #f58200; } .s20 { background: #ff9d9a; }
.s21 { background: #766b62; } .s22 { background: #b7aed6; } .s23 { background: #8f82b8; } .s24 { background: #6b79b5; }
.s25 { background: #7a5fa0; } .s26 { background: #7a7095; } .s27 { background: #4e5a7d; } .s28 { background: #524c60; }
.s29 { background: #5c6c85; } .s30 { background: #0079c8; } .s31 { background: #62bdf1; } .s32 { background: #8eaabf; }
.s33 { background: #72858f; } .s34 { background: #5b686b; } .s35 { background: #424546; } .s36 { background: #47605e; }

/* status */
.status { height: 44px; flex: none; display: flex; border-top: 1px solid #f4f2ec; border-bottom: 1px solid #a8a69f; font-size: 11.400px; }
.status-text { flex: 1; padding: 1px 0 0 6px; min-width: 0; }
.sline { height: 20px; display: flex; align-items: center; white-space: pre; }
.sg1 { margin-left: 10px; }
.sg2 { margin-left: 14px; }
.sg3 { margin-left: 8px; }
.sg4 { margin-left: 51px; }
.coord { width: 115px; flex: none; }
.status-fill { width: 207px; flex: none; display: flex; flex-direction: column; padding-top: 1px; font-size: 10.500px; }
.fillrow { height: 20px; display: flex; align-items: center; }
.fillrow svg { margin-right: 3px; margin-left: 2px; }
.nocolor { width: 18px; height: 18px; border: 1px solid #666; margin-right: 5px; background: #fff; position: relative; overflow: hidden; }
.nocolor::after { content: ""; position: absolute; left: 7px; top: -4px; width: 2px; height: 26px; background: #c81020; transform: rotate(-42deg); }

/* taskbar */
.taskbar { height: 30px; flex: none; display: flex; align-items: center; padding: 2px 0 3px; border-top: 1px solid #fff; }
.raised-b, .task { border: 1px solid; border-color: #fff #404040 #404040 #fff; box-shadow: inset -1px -1px #808080; }
.start { width: 47px; height: 21px; margin-left: 2px; flex: none; display: flex; align-items: center; gap: 2px; padding-left: 3px; }
.startlogo { width: 14px; height: 14px; background: linear-gradient(135deg, #e44 50%, #27c 50%); }
.ql { width: 42px; margin-left: 11px; display: flex; gap: 2px; flex: none; }
.task { width: 159px; height: 21px; flex: none; display: flex; align-items: center; gap: 4px; padding-left: 4px; white-space: pre; margin-left: 3px; }
.task.active { border-color: #404040 #fff #fff #404040; box-shadow: inset 1px 1px #808080; background: repeating-conic-gradient(#d4d0c8 0 25%, #fff 0 50%) 0 0 / 2px 2px; width: 158px; }
.task.active + .task { margin-left: 4px; }
.tray-ic { flex: none; display: flex; justify-content: center; }
.kb { margin-left: 682px; width: 16px; }
.tsep { width: 1px; height: 24px; background: #8c8a84; flex: none; margin-left: 3px; margin-right: 7px; }
.help { width: 14px; }
.helpq { font: bold 11px "Liberation Sans", sans-serif; fill: #223; }
.rest { flex-direction: column; align-items: center; gap: 4px; width: 12px; }
.tray { margin-left: auto; margin-right: 3px; width: 78px; height: 23px; border: 1px solid; border-color: #808080 #fff #fff #808080; display: flex; align-items: center; gap: 4px; padding-left: 4px; flex: none; }
.clock { margin-left: 5px; }

/* forum watermark laid over the taskbar */
.watermark { position: absolute; left: 0; top: 850px; }
.wm-halo { fill: none; stroke: #fff; stroke-width: 7px; stroke-linejoin: round; }
.wm-m { fill: none; stroke: #a81c1c; stroke-width: 5px; stroke-linejoin: round; }
.wm-cn { font: bold 20px "Noto Sans CJK TC", sans-serif; fill: #f09020; stroke: #fff; stroke-width: 2px; paint-order: stroke; }
.wm-en { font: bold 12px "Liberation Sans", sans-serif; fill: #223a70; stroke: #fff; stroke-width: 2px; paint-order: stroke; }
```
